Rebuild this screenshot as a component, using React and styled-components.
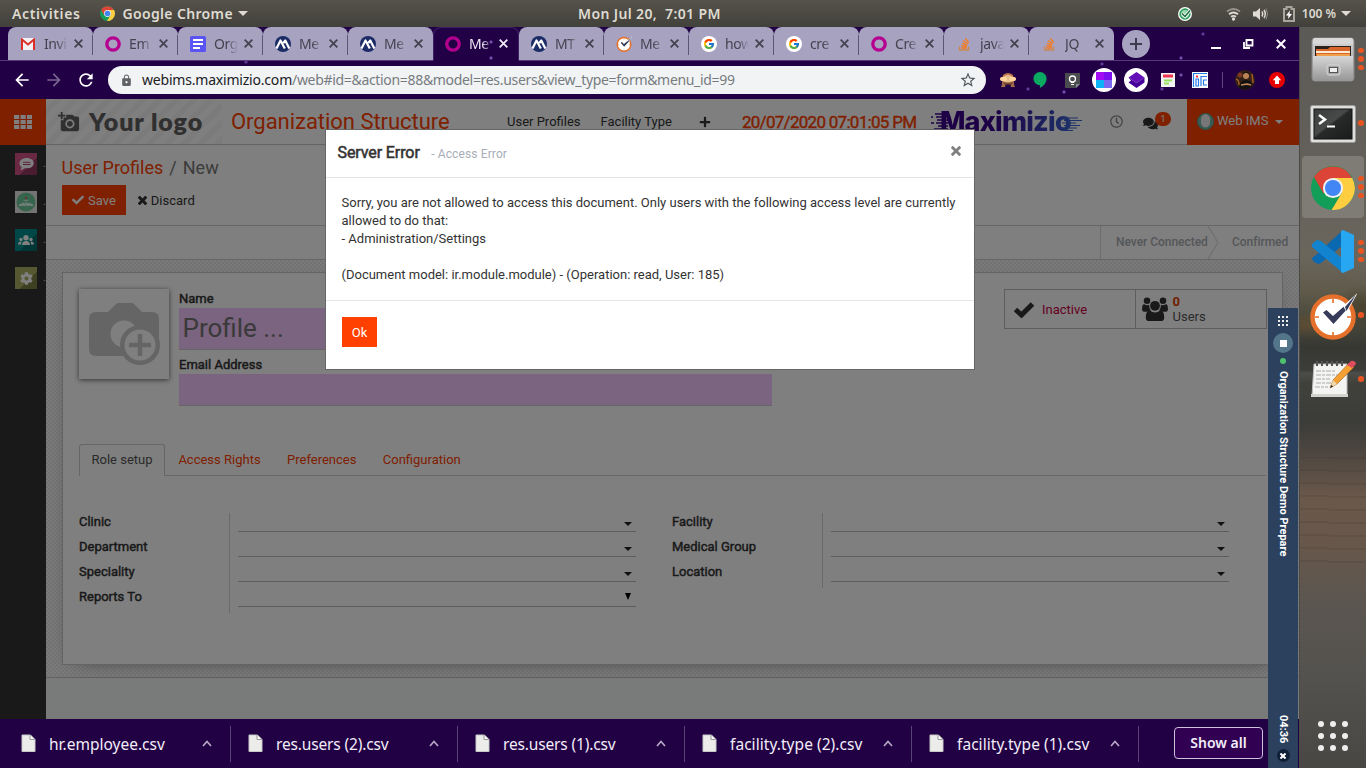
import React from "react";
import styled, { createGlobalStyle, css } from "styled-components";
import { FaCheck, FaComments, FaPlus, FaCog, FaRegClock } from "react-icons/fa";
import { MdLock, MdStarBorder, MdArrowBack, MdArrowForward, MdRefresh, MdAddAPhoto } from "react-icons/md";
import { FcGoogle } from "react-icons/fc";

const UI = `"Noto Sans", "Open Sans", sans-serif`;

const Global = createGlobalStyle`
  * { box-sizing: border-box; }
  html, body { margin: 0; overflow: hidden; }
  body { width: 1366px; height: 768px; font-family: Roboto, sans-serif; font-size: 13px; color: #333; }
  svg { display: block; flex: none; }
`;

const Desktop = styled.div`
  display: flex; flex-direction: column; width: 1366px; height: 768px; overflow: hidden;
`;
const Between = styled.div`display: flex; flex: 1; min-height: 0;`;

/* ---------- GNOME top bar ---------- */
const TopBar = styled.header`
  display: grid; grid-template-columns: 566px auto 1fr; align-items: center; height: 27px; flex: none;
  padding: 0 15px 0 12px; background: linear-gradient(#56534b, #41403a);
  font: 600 14px/27px ${UI}; color: #dfdbd2; white-space: pre;
`;
const BarGroup = styled.div`
  display: flex; align-items: center; justify-content: ${(p) => (p.$end ? "flex-end" : "flex-start")};
`;
const BarText = styled.span`letter-spacing: ${(p) => p.$ls || 0}px; margin-left: ${(p) => p.$ml || 0}px; font-size: ${(p) => p.$size || 14}px;`;
const BarIcon = styled.span`margin-left: ${(p) => p.$ml}px; display: flex;`;
const Caret = styled.i`
  width: 0; height: 0; border: ${(p) => p.$w || 5}px solid transparent; border-bottom: 0;
  border-top: ${(p) => p.$h || 5}px solid ${(p) => p.$c || "#dfdbd2"}; margin-left: ${(p) => p.$ml || 0}px;
`;

/* ---------- browser frame ---------- */
const Browser = styled.div`
  position: relative; width: 1299px; display: flex; flex-direction: column; background: #210046;
`;
const star = (x, y, c = "#9a7be0") => `radial-gradient(circle at ${x}px ${y}px, ${c} 0, ${c}88 1px, transparent 2.2px)`;
const TabStrip = styled.div`
  display: flex; height: 34px; flex: none; padding-left: 8px; border-bottom: 1px solid #57397b;
  background: ${star(1181, 31)}, ${star(1203, 7, "#7a5cc0")}, #210046;
`;
const Tab = styled.div`
  display: flex; align-items: center; width: 85px; height: 33px; padding: 0 10.5px 0 12px; position: relative;
  border-radius: 8px 8px 0 0; background: ${(p) => (p.$active ? "#210046" : "#a8a2c1")};
  color: ${(p) => (p.$active ? "#eeeaf6" : "#45424f")};
  ${(p) => p.$active && css`width: 86px; border: 1px solid #3d2166; border-bottom-color: #210046; height: 34px;
    padding: 0 10px 1px 11px; background: ${star(57, 14)}, ${star(57, 30)}, #210046;`}
  ${(p) => p.$line && css`&::after { content: ""; position: absolute; right: 0; top: 8px; width: 1px; height: 20px; background: #5d5675; }`}
`;
const TabIcon = styled.span`display: flex; justify-content: center; width: 16px;`;
const TabTitle = styled.span`
  width: 24px; margin-left: 8px; overflow: hidden; white-space: nowrap; font: 14px/20px ${UI}; letter-spacing: -.4px;
  mask-image: linear-gradient(90deg, #000 55%, transparent 100%);
`;
const TabClose = styled.span`margin-left: auto; display: flex;`;
const NewTab = styled.div`
  display: grid; place-items: center; width: 28px; height: 28px; margin: 3px 0 0 8px; border-radius: 50%;
  background: #a8a2c1; color: #403a50;
`;
const WindowButtons = styled.div`display: flex; align-items: center; margin-left: auto; padding-right: 13px; gap: 22px;`;

const Toolbar = styled.div`
  display: flex; align-items: center; height: 38px; flex: none; padding: 0 14px 0 12px; color: #fff;
  background: ${star(1064, 31)}, ${star(1181, 14)}, ${star(1028, 28, "#7a5cc0")}, ${star(1102, 3, "#7a5cc0")}, ${star(1162, 28, "#7a5cc0")}, ${star(246, 1, "#7a5cc0")}, #210046;
`;
const ToolIcon = styled.span`display: flex; margin-left: ${(p) => p.$ml || 0}px; opacity: ${(p) => (p.$dim ? 0.4 : 1)};`;
const Address = styled.div`
  display: flex; align-items: center; width: 878px; height: 28px; margin-left: 12px; padding: 0 9px 0 12px;
  border-radius: 14px; background: #f1f3f5; color: #777c80; font: 14px/28px ${UI}; white-space: nowrap;
  b { font-weight: 400; color: #202124; letter-spacing: -.2px; margin-left: 9px; }
  span { letter-spacing: -.32px; }
  svg:last-child { margin-left: auto; }
`;
const Extensions = styled.div`display: flex; align-items: center; margin-left: auto;`;
const Ext = styled.span`
  display: grid; place-items: center; width: ${(p) => p.$w || 24}px; height: 24px; margin-left: ${(p) => (p.$ml ?? 8)}px;
  border-radius: 50%; background: ${(p) => p.$bg || "transparent"};
`;
const Divider = styled.i`width: 1px; height: 16px; background: #5e4580; margin-left: 10px;`;

/* ---------- web page ---------- */
const Page = styled.div`position: relative; display: flex; height: 620px; flex: none; background: #fff;`;
const Side = styled.nav`
  width: 46px; background: #333; display: flex; flex-direction: column; overflow: hidden; flex: none;
`;
const Apps = styled.div`height: 46px; background: #ff4000; display: grid; place-items: center; margin-bottom: 8px;`;
const SideItem = styled.div`
  display: flex; align-items: center; width: 46px; height: 22px; margin-bottom: 16px; padding-left: 15px; color: #ddd; flex: none;
  font-size: 10px; line-height: 22px;
`;
const SideTile = styled.span`
  width: 23px; height: 22px; display: grid; place-items: center; margin-right: 6px;
  background: ${(p) => p.$bg};
`;
const Main = styled.main`flex: 1; min-width: 0; display: flex; flex-direction: column;`;
const Nav = styled.div`
  display: flex; align-items: center; height: 46px; flex: none; border-bottom: 1px solid #c8c8c8; color: #333; white-space: nowrap;
`;
const LogoArea = styled.div`
  display: flex; align-items: center; width: 176px; height: 45px; padding-left: 12px; color: #606060; flex: none;
  background: repeating-linear-gradient(135deg, #fff 0 6px, #f7f7f7 6px 12px);
  span { font: 800 25px/43px Lato, sans-serif; margin-left: 9px; letter-spacing: .9px; }
`;
const AppName = styled.div`width: 232px; margin-left: 9px; font-size: 22px; line-height: 45px; color: #ff4000; letter-spacing: -.03px;`;
const NavLink = styled.div`margin-left: ${(p) => p.$ml}px; line-height: 44px; display: flex; align-items: center;`;
const Clock = styled.div`width: 175px; margin-left: 31px; font-size: 17px; color: #ff4000; -webkit-text-stroke: .4px; letter-spacing: -.71px;`;
const Brand = styled.div`
  display: flex; align-items: center; width: 153px; margin-left: 13px; height: 45px;
  span { font: 800 27px/43px Inter, sans-serif; letter-spacing: -.75px; margin-left: -8px;
    background: linear-gradient(90deg, #3a008c 0 40%, #3a62d0); background-clip: text; color: transparent; }
  svg:last-child { margin-left: -9px; margin-top: 5px; }
`;
const Bubble = styled.div`
  position: relative; width: 28px; height: 18px; margin-left: 20px; padding-top: 3px;
`;
const Badge = styled.span`
  position: absolute; left: 12px; top: -1px; width: 16px; height: 14px; border-radius: 7px; background: #ff4000;
  color: #fff; font-size: 9.5px; line-height: 14px; text-align: center;
`;
const User = styled.div`
  display: flex; align-items: center; width: 112px; height: 46px; margin: 1px 0 0 auto; padding-left: 10px; line-height: 44px;
  background: #ff4000; color: #fff; flex: none; span { margin: -2px 0 0 3px; }
`;
const Avatar = styled.i`
  width: 17px; height: 17px; border-radius: 50%; border: 1px solid #4f9f90; margin-top: -2px;
  background: radial-gradient(ellipse 5px 7px at 50% 45%, #eee 0 92%, transparent), #74b8a8;
`;
const Control = styled.div`height: 81px; flex: none; padding: 11px 16px 0 15.5px; border-bottom: 1px solid #ccc;`;
const Crumbs = styled.div`font-size: 18px; line-height: 24px; color: #777; b { font-weight: 400; color: #ff4000; } i { font-style: normal; margin: 0 6px; }`;
const Buttons = styled.div`display: flex; margin: 5px 0 0 .5px; align-items: center; color: #333;`;
const Btn = styled.div`
  display: flex; align-items: center; height: 30px; padding: 0 ${(p) => (p.$primary ? 10 : 12)}px;
  ${(p) => p.$primary && css`background: #ff4000; color: #fff;`}
  span { margin-left: 4px; }
`;
const Status = styled.div`
  display: flex; justify-content: flex-end; height: 34px; flex: none; border-bottom: 1px solid #ccc; color: #a9adb2;
  font: 500 12px/33px Roboto, sans-serif; white-space: nowrap;
`;
const Stage = styled.div`
  display: flex; padding-left: ${(p) => (p.$first ? 15 : 13)}px; width: ${(p) => (p.$first ? 119 : 80)}px;
  letter-spacing: -.03px;
  ${(p) => p.$first && css`border-left: 1px solid #d9d9d9;`} svg { margin-left: auto; }
`;
const Canvas = styled.div`
  height: 418px; flex: none; padding: 12px 16px; border-bottom: 1px solid #c4c4c4;
  background: conic-gradient(#e6e6e6 25%, #f6f6f6 0 50%, #e6e6e6 0 75%, #f6f6f6 0) 0 0 / 4px 4px;
`;
const Sheet = styled.section`
  height: 393px; padding: 16px; background: #fff; border: 1px solid #c8c8c8; box-shadow: 0 5px 20px -15px #000;
`;
const Head = styled.div`display: flex; height: 155px;`;
const Photo = styled.div`
  width: 90px; height: 90px; box-shadow: 0 1px 5px rgba(0,0,0,.6); display: grid; place-items: center; background: #fff;
`;
const Identity = styled.div`width: 593px; margin-left: 10px; padding-top: 1px;`;
const Label = styled.div`
  font-size: 13px; line-height: ${(p) => p.$lh || 18}px; color: #333; -webkit-text-stroke: .45px #333; white-space: nowrap;
`;
const Input = styled.div`
  height: ${(p) => p.$h}px; background: #f4c8ff; border-bottom: 1px solid #ccc; margin-bottom: 6px; padding-left: 3.5px;
  font-size: 26px; line-height: ${(p) => p.$h - 1}px; color: #757575;
`;
const StatBox = styled.div`
  display: flex; width: 263px; height: 40px; margin: 0 -1px 0 auto; border: 1px solid #bbb; color: #333;
`;
const Stat = styled.div`
  display: flex; align-items: center; width: 131px; padding-left: ${(p) => (p.$first ? 8 : 6)}px; line-height: 15px;
  ${(p) => p.$first && css`border-right: 1px solid #bbb; color: #cc0044;`}
  span { margin-left: ${(p) => (p.$first ? 7 : 5)}px; color: ${(p) => (p.$first ? "#cc0044" : "#555")}; }
  b { display: block; font-weight: 700; color: #e04000; }
`;
const Tabs = styled.div`display: flex; height: 32px; border-bottom: 1px solid #ccc; width: 1187px; color: #ff4000; line-height: 30px; gap: 26.4px;`;
const FormTab = styled.div`
  ${(p) => p.$on && css`height: 32px; width: 86px; margin-right: -13px; padding-left: 11.5px; background: #fff; color: #555;
    border: 1px solid #ccc; border-bottom: 0; border-radius: 3px 3px 0 0;`}
  ${(p) => !p.$on && css`padding-top: 1px;`}
`;
const Groups = styled.div`display: flex; margin-top: 37px; gap: 36px;`;
const Group = styled.div`width: 557px;`;
const Field = styled.div`display: flex; height: 25px;`;
const FieldLabel = styled(Label)`width: 151px; border-right: 1px solid #d4d4d4; line-height: 18px;`;
const Select = styled.div`
  width: 398px; height: 19px; margin-left: 8px; border-bottom: 1px solid #bbb; display: flex; justify-content: flex-end;
  align-items: center; padding: ${(p) => (p.$tall ? "0 5px 1px 0" : "3px 4px 0 0")};
`;
const Footer = styled.div`flex: 1; background: #f3f4f4;`;

/* ---------- dialog ---------- */
const Backdrop = styled.div`position: absolute; inset: 0; background: rgba(0, 0, 0, .5);`;
const Dialog = styled.div`
  position: absolute; left: 325px; top: 30px; width: 650px; height: 241px; background: #fff; border: 1px solid #666;
`;
const DialogHead = styled.div`
  display: flex; height: 48px; border-bottom: 1px solid #e5e5e5; padding: 1px 12px 0 11.5px; line-height: 44px; color: #a8adb8;
  b { font-weight: 400; font-size: 16px; color: #333; -webkit-text-stroke: .55px #333; margin-right: 11.5px; letter-spacing: -.1px; }
  small { font-size: 12px; line-height: 47px; letter-spacing: .12px; } svg { margin: 15px 1px 0 auto; }
`;
const DialogBody = styled.div`height: 123px; padding: 16px 15.5px; line-height: 18px; border-bottom: 1px solid #e5e5e5; color: #333; white-space: pre;`;
const Ok = styled.div`margin: 16px; width: 35px; height: 30px; background: #ff4000; color: #fff; line-height: 31px; text-align: center;`;

/* ---------- recorder strip ---------- */
const Recorder = styled.div`
  position: absolute; left: 1268px; top: 281px; width: 30px; height: 460px; background: #2b415e; color: #fff;
  display: flex; flex-direction: column; align-items: center; padding: 8px 0 6px;
`;
const Grip = styled.div`
  display: grid; grid-template-columns: repeat(3, ${(p) => p.$d}px); gap: ${(p) => p.$g}px;
  i { height: ${(p) => p.$d}px; background: #eee; border-radius: ${(p) => p.$r || 0}px; }
`;
const Stop = styled.div`width: 20px; height: 20px; border-radius: 50%; background: #54768a; display: grid; place-items: center; margin-top: 7px; i { width: 7px; height: 7px; background: #fff; }`;
const Live = styled.i`width: 6px; height: 6px; border-radius: 50%; background: #4ec06e; margin-top: 5px;`;
const Vertical = styled.div`writing-mode: vertical-rl; white-space: nowrap; font: 700 11px/14px Roboto, sans-serif; margin-top: ${(p) => p.$mt};`;
const CloseDot = styled.div`width: 13px; height: 13px; border-radius: 50%; background: #102036; display: grid; place-items: center; margin-top: 6px;`;

/* ---------- downloads ---------- */
const Downloads = styled.div`display: flex; align-items: center; height: 49px; flex: none; background: #210044; color: #f2edf8; font: 15.5px/20px ${UI};`;
const Download = styled.div`
  display: flex; align-items: center; width: 227px; height: 36px; padding: 0 18px 0 17px; border-right: 1px solid #5a4378; white-space: nowrap;
  &:first-child { width: 231px; padding-left: 21px; }
  span { margin: 1px 0 0 13px; letter-spacing: ${(p) => p.$ls}px; } svg:last-child { margin-left: auto; }
`;
const ShowAll = styled.div`
  width: 89px; height: 32px; margin: -1px 0 0 35px; border: 1px solid #cdc3dc; border-radius: 4px; background: #310052;
  font: 600 14px/30px ${UI}; text-align: center;
`;

/* ---------- dock ---------- */
const Dock = styled.aside`
  width: 67px; padding: 1px 2px 17px 2px; display: flex; flex-direction: column; align-items: center; border-left: 1px solid #4c4a46;
  background:
    repeating-linear-gradient(1deg, transparent 0 5px, rgba(30, 28, 25, .10) 5px 7px, transparent 7px 13px) 0 430px / 100% 110px no-repeat,
    radial-gradient(ellipse 34px 14px at 8px 298px, rgba(110, 82, 46, .6), transparent),
    radial-gradient(ellipse 26px 22px at 62px 280px, rgba(70, 62, 42, .8), transparent),
    linear-gradient(#5c5a57 0, #63605a 130px, #6a665c 230px, #5f5a4a 265px, #4a4a3c 290px, #373833 320px, #3c3d39 343px, #4c4c49 346px, #41413c 356px,
    #3b3c39 395px, #504841 430px, #6a584b 470px, #67574a 520px, #5c5650 570px, #55534f 640px, #484744 741px);
`;
const DockItem = styled.div`
  position: relative; width: 62px; height: 62px; margin-bottom: 2px; border-radius: 4px; display: grid; place-items: center; flex: none;
  background: ${(p) => (p.$on ? "#7f7c76" : "transparent")}; padding-top: 1px;
`;
const Dots = styled.div`
  position: absolute; right: 0; top: 0; bottom: 0; display: flex; flex-direction: column; justify-content: center; gap: 3px;
  i { width: 5.6px; height: 5.6px; border-radius: 50%; background: #e95420; }
`;
const Launcher = styled.div`margin-top: auto;`;

/* ---------- drawings ---------- */
const ChromeLogo = ({ s }) => (
  <svg width={s} height={s} viewBox="0 0 48 48">
    <circle cx="24" cy="24" r="24" fill="#129d58" />
    <path d="M3.2 12A24 24 0 0 1 44.8 13H24L13.6 30Z" fill="#db4437" />
    <path d="M24 13H45A24 24 0 0 1 22.5 48L33.5 29.5Z" fill="#ffcd40" />
    <circle cx="24" cy="24" r="11" fill="#f1f1f1" /><circle cx="24" cy="24" r="8.8" fill="#4285f4" />
  </svg>
);
const Gmail = () => (
  <svg width="14" height="12" viewBox="0 0 14 12"><rect width="14" height="12" rx="1" fill="#f2f0f2" /><path d="M1 12V1.5L7 6.5l6-5V12" fill="none" stroke="#d9302a" strokeWidth="2" /></svg>
);
const Ring = () => <svg width="16" height="16"><circle cx="8" cy="8" r="6.2" fill="none" stroke="#b5008f" strokeWidth="3.3" /></svg>;
const Doc = () => <svg width="16" height="16"><rect width="16" height="16" rx="1.5" fill="#5a55f2" /><path d="M3 4h10M3 8h10M3 12h7" stroke="#fff" strokeWidth="1.8" /></svg>;
const Peaks = () => <svg width="16" height="16"><circle cx="8" cy="8" r="8" fill="#1d2c66" /><path d="M1.500 12.500 5.500 4.500l4.300 8M8.300 7 10.300 4.500l4 8" stroke="#fff" strokeWidth="2.200" fill="none" strokeLinejoin="round" /></svg>;
const TimeCheck = ({ s }) => (
  <svg width={s} height={s} viewBox="0 0 48 48">
    <circle cx="24" cy="25" r="20.5" fill="#fff" stroke="#e4702b" strokeWidth="4.5" />
    <path d="M24 7v4M24 40v4M6 25h4M38 25h4" stroke="#e4702b" strokeWidth="1.6" />
    <path d="M14 20.500 17.500 18l6.500 6L36 13.500l4 1.500L24.500 32Z" fill="#353b59" />
    <path d="M34 14 48.500 1 40 16.500l-3 2.500Z" fill="#fff" /><path d="m36 15 11-12.500L37.500 19Z" fill="#353b59" />
  </svg>
);
const Google = () => <svg width="16" height="16"><circle cx="8" cy="8" r="8" fill="#fff" /><FcGoogle x="2" y="2" size={12} /></svg>;
const Stack = () => (
  <svg width="13" height="14"><path d="M1.500 9.500v3.500h9V9.500" fill="none" stroke="#c9894f" strokeWidth="1.300" /><path d="M3.200 11h5.600M3.300 8.700l5.500.8M4 6.200l5.200 1.900M5.300 3.600l4.500 3.200M7.500 1.300l3.300 4.400" stroke="#f47a20" strokeWidth="1.400" /></svg>
);
const Cross = ({ s = 8, w = 1.8, c = "currentColor" }) => <svg width={s} height={s} viewBox="0 0 8 8"><path d="m.6.6 6.8 6.8M7.4.6.6 7.4" stroke={c} strokeWidth={w * 8 / s} /></svg>;
const Plus = () => <svg width="12" height="12"><path d="M6 0v12M0 6h12" stroke="#403a50" strokeWidth="2" /></svg>;
const File = () => <svg width="15" height="20" viewBox="0 0 15 20"><path d="M1 1h8.500L14 5.500v12H1Z" fill="#ececea" stroke="#c9c9c9" /><path d="M9 1v4.500h4.500" fill="#fff" stroke="#999" /></svg>;
const Chevron = () => <svg width="10" height="7"><path d="m1 6 4-4.5L9 6" fill="none" stroke="#b9abc9" strokeWidth="1.6" /></svg>;
const Wifi = () => <svg width="15" height="14"><g fill="none" stroke="#dfdbd2" strokeWidth="1.8"><path d="M1 4.500q6.500-5 13 0" opacity=".5" /><path d="M3 7.200q4.500-3.500 9 0M5 9.800q2.500-1.700 5 0" /></g><circle cx="7.500" cy="12" r="1.700" fill="#dfdbd2" /></svg>;
const Speaker = () => <svg width="15" height="14"><path d="M0 4.500h3L7 1v12L3 9.500H0Z" fill="#dfdbd2" /><path d="M9 4.500q1.500 2.500 0 5M11 3q2.500 4 0 8" stroke="#dfdbd2" strokeWidth="1.500" fill="none" /><path d="M13 1.500q3 5.500 0 11" stroke="#8f8c85" fill="none" /></svg>;
const Battery = () => <svg width="12" height="16"><path d="M1 3h2.500V1h5v2H11v12H1Z" fill="none" stroke="#a8a59d" strokeWidth="2" /><path d="M7 4.500 3 9.500h2.500L5 13l4-5H6.500Z" fill="#fff" /></svg>;
const Synced = () => <svg width="14" height="14"><circle cx="7" cy="7" r="6.300" fill="#2e9c5a" stroke="#fff" strokeWidth="1.300" /><circle cx="7" cy="7" r="4" fill="#9bd8ae" /><path d="m4 6.500 3 3 5-6" stroke="#fff" strokeWidth="3" fill="none" /><path d="m4 6.500 3 3 5-6" stroke="#17643a" strokeWidth="1.400" fill="none" /></svg>;
const Peek = () => <svg width="16" height="16"><path d="M3 3q5-4 10 0l1 9H2Z" fill="#b9764a" /><ellipse cx="8" cy="7" rx="5" ry="4" fill="#e8bd8e" /><ellipse cx="3.500" cy="7" rx="3.500" ry="2.200" fill="#ffd79e" /><ellipse cx="12.500" cy="7" rx="3.500" ry="2.200" fill="#ffd79e" /><path d="M1 15l2-5h3l-1 5ZM15 15l-2-5h-3l1 5Z" fill="#a26d4a" /><path d="M3 10.500h10l-1 2H4Z" fill="#7a4a30" /></svg>;
const Hangout = () => <svg width="14" height="16"><path d="M7 0a6.600 6.600 0 0 0 0 13.200V16q6.800-4 6.600-9.400A6.600 6.600 0 0 0 7 0Z" fill="#0ba862" /></svg>;
const Keep = () => <svg width="15" height="15"><path d="M0 0h15v11l-4 4H0Z" fill="#4a4c50" /><path d="M11 15v-4h4Z" fill="#8b8d90" /><circle cx="7.500" cy="6" r="3" fill="none" stroke="#fff" strokeWidth="1.300" /><path d="M6 9.500h3M6 11.500h3" stroke="#fff" /></svg>;
const Quad = () => <svg width="16" height="16"><rect width="8" height="8" fill="#a10cf5" /><rect x="8" width="8" height="8" fill="#7b0ff0" /><rect y="8" width="8" height="8" fill="#0cb3f7" /><rect x="8" y="8" width="8" height="8" fill="#7a68f2" /></svg>;
const Layers = () => <svg width="17" height="16"><path d="m8.500 0 8 5.500-8 5.500-8-5.500Z" fill="#6310b8" /><path d="m.5 5.500 8 5.500 8-5.500v5l-8 5.500-8-5.500L3 8.500Z" fill="#46009a" /></svg>;
const Card = () => <svg width="14" height="14"><rect width="14" height="14" fill="#f3f3f3" /><rect x="2" y="1.500" width="10" height="3" fill="#ef3550" /><path d="M3 7.500h8M3 10.500h5" stroke="#98e25c" strokeWidth="1.800" /></svg>;
const IcSquare = () => <svg width="16" height="16"><rect width="16" height="16" fill="#fff" /><path d="M1.500 15V1.500H15M4 7h2.500v7H4ZM15 4.500H9V14M15 8h-3.500v5H15" fill="none" stroke="#2479e8" strokeWidth="1.200" /><path d="M5 3.500v2" stroke="#e33" strokeWidth="2.200" /></svg>;
const Face = () => <svg width="20" height="20"><circle cx="10" cy="10" r="10" fill="#352016" /><circle cx="5" cy="5" r="2.500" fill="#7c3824" /><circle cx="11" cy="6" r="3" fill="#b98355" /><path d="M8 4q3-3 6 0V3q-3-3-6 0Z" fill="#111" /><path d="M4 18q1-8 7-8t6 6q-5 6-13 2" fill="#111" /><path d="m6 15 6-1 4 1" stroke="#c78a5a" strokeWidth="1.500" fill="none" /><path d="M1 9q3 1 3 6M17 4l1 9" stroke="#a15c24" strokeWidth="1.500" /></svg>;
const Update = () => <svg width="16" height="16"><circle cx="8" cy="8" r="8" fill="#e60000" /><path d="m8 3.500 4.200 4.700H10V12H6V8.200H3.800Z" fill="#fff" /></svg>;
const People = ({ w, c = "#333" }) => (
  <svg width={w} height={w * 0.94} viewBox="0 0 26 24.500" fill={c}>
    <circle cx="5" cy="3.800" r="3.300" /><circle cx="21" cy="3.800" r="3.300" />
    <path d="M0 12.500Q0 6.800 2.300 7.200 5 9 7 7.800 7 11 8.800 13.300 7 14 6.200 14.800H2.300Q0 14.800 0 12.500ZM26 12.500Q26 6.800 23.700 7.200 21 9 19 7.800 19 11 17.200 13.300 19 14 19.800 14.800h3.900Q26 14.800 26 12.500Z" />
    <circle cx="13" cy="8.800" r="4.900" /><path d="M3.700 20.500q0-6.700 4.300-6.900 2 1.900 5 1.900t5-1.900q4.300.2 4.300 6.900 0 3.800-3.600 3.800H7.300q-3.600 0-3.600-3.800Z" />
  </svg>
);
const Crowd = () => (
  <svg width="16" height="11" fill="#fff"><circle cx="8" cy="2.800" r="2.700" /><circle cx="3" cy="4.500" r="1.700" /><circle cx="13" cy="4.500" r="1.700" /><path d="M4 10q0-4 4-4t4 4ZM0 9.500q0-3 3.500-3L3 9.500ZM16 9.500q0-3-3.500-3l.5 3Z" /></svg>
);
const Speech = () => <svg width="15" height="13"><path d="M7.700 0C3.500 0 .5 2.300.5 5.300c0 1.700.8 3 2.200 4L1.500 12q2.400-.3 4-1.800 8.800 1 9.300-4.900C14.800 2.300 11.800 0 7.700 0Z" fill="#fff" /><path d="M4 4.300h7.500M4 6.500h7.500" stroke="#b34572" /></svg>;
const Cam = () => (
  <svg width="71" height="62" viewBox="0 0 71 62">
    <path d="M7 9h12l8-8q1-1 2-1h14q1 0 2 1l8 8h10q7 0 7 7v30q0 7-7 7H7q-7 0-7-7V16q0-7 7-7Z" fill="#cbcbcb" />
    <circle cx="35" cy="31" r="13.500" fill="#fff" /><circle cx="51" cy="42" r="20" fill="#cbcbcb" /><circle cx="51" cy="42" r="15.500" fill="#fff" />
    <path d="M51 31v22M40 42h22" stroke="#cbcbcb" strokeWidth="4.500" />
  </svg>
);
const Speed = () => (
  <svg width="18" height="20" viewBox="0 0 18 20"><path d="M5 2h13M1 5h2M6 5h12M7 8h11M1 11h3M6 11h12M8 14h10M4 17h14" stroke="#3a008c" strokeWidth="1.700" /></svg>
);
const Trail = () => (
  <svg width="20" height="16" viewBox="0 0 20 16"><path d="M0 2h16M2 4.500h18M0 7h14M2 9.500h16M0 12h15M0 14.500h11" stroke="#3a62d0" strokeWidth="1.200" /></svg>
);
const Cabinet = () => (
  <svg width="44" height="46" viewBox="0 0 44 46">
    <defs><linearGradient id="cab" x2="0" y2="1"><stop stopColor="#d6d6d6" /><stop offset="1" stopColor="#969696" /></linearGradient></defs>
    <rect x="1" y="1" width="42" height="43" rx="3" fill="url(#cab)" stroke="#888" /><path d="M2 7V3q0-2 2-2h36q2 0 2 2v4Z" fill="#d8d8d8" />
    <rect x="4" y="9" width="36" height="12" fill="#2b211b" /><path d="M5 12h12l2-2h20v10H5Z" fill="#d9662c" /><path d="M5 14h34v2H5Z" fill="#fce9d0" /><path d="M6 18h33" stroke="#f0a04a" strokeWidth="2" />
    <path d="M2 19h40v23q0 2-2 2H4q-2 0-2-2Z" fill="url(#cab)" /><rect x="16" y="28" width="13" height="10" rx="2" fill="#aaa" stroke="#d9d9d9" /><rect x="18.500" y="30.500" width="8" height="5" fill="#eee" stroke="#555" />
  </svg>
);
const Terminal = () => (
  <svg width="46" height="38" viewBox="0 0 46 38"><defs><linearGradient id="term" x2="1" y2="1"><stop stopColor="#3a3c3b" /><stop offset=".45" stopColor="#484a49" /><stop offset=".5" stopColor="#282a29" /><stop offset="1" stopColor="#1a1c1b" /></linearGradient></defs>
    <rect x=".5" y=".5" width="45" height="37" rx="2" fill="#dededc" stroke="#999" /><rect x="4" y="4" width="38" height="30" fill="url(#term)" stroke="#111" />
    <path d="m9 10 6 4.500L9 19" fill="none" stroke="#fff" strokeWidth="2.500" /><path d="M17 21.500h8" stroke="#fff" strokeWidth="2" /></svg>
);
const Code = () => (
  <svg width="44" height="43" viewBox="0 0 44 43"><path d="M32 0 5 25l-4 3 1 3 5 3 3-1 22-18Z" fill="#0a69b0" /><path d="M1 14l5-4 4 1 22 18v14L1 17Z" fill="#1283cf" /><path d="M32 0 43 5v33L32 43l-2-1V1Z" fill="#27a7f2" /></svg>
);
const Notes = () => (
  <svg width="46" height="42" viewBox="0 0 46 42"><path d="M4 5h33v32H2Z" fill="#f4f4f2" stroke="#bbb" /><path d="M1 35h37v3H1Z" fill="#d2d2d0" />
    <path d="M7 2v5M12 2v5M17 2v5M22 2v5M27 2v5M32 2v5" stroke="#555" strokeWidth="2" /><path d="M6 12h20M6 16h22M6 20h14M6 24h18M5 28h13" stroke="#aaa" strokeDasharray="5 1 3 1" />
    <path d="m20 29 3-8L39 4l5 4-17 17Z" fill="#f5a032" stroke="#a7631b" strokeWidth=".6" /><path d="m37 6 4-4q4-1 5 3l-4 4Z" fill="#df4d5c" /><path d="m20 29 3-8 4 4Z" fill="#f0d7b0" /><path d="m20 29 1.200-3 2 1.500Z" fill="#222" /></svg>
);

const tabs = [
  ["Invi", Gmail, 1], ["Em", Ring, 1], ["Org", Doc, 1], ["Me", Peaks, 1], ["Me", Peaks, 0], ["Me", Ring, 0, 1], ["MT", Peaks, 1],
  ["Me", () => <TimeCheck s={16} />, 1], ["how", Google, 1], ["cre", Google, 1], ["Cre", Ring, 1], ["java", Stack, 1], ["JQ", Stack, 0],
];
const downloads = [["hr.employee.csv", 0], ["res.users (2).csv", -0.15], ["res.users (1).csv", -0.15], ["facility.type (2).csv", 0.05], ["facility.type (1).csv", 0.05]];
const dock = [[Cabinet, 3], [Terminal, 1], [() => <ChromeLogo s={44} />, 3, 1], [Code, 3], [() => <TimeCheck s={48} />, 1], [Notes, 1]];

const FieldGroup = ({ labels }) => (
  <Group>
    {labels.map((l) => (
      <Field key={l}><FieldLabel>{l}</FieldLabel>
        <Select $tall={l === "Reports To"}>{l === "Reports To" ? <Caret $w={3.5} $h={7} $c="#000" /> : <Caret $w={4} $h={4} $c="#222" />}</Select>
      </Field>
    ))}
  </Group>
);

export default function App() {
  return (
    <Desktop>
      <Global />
      <TopBar>
        <BarGroup>
          <BarText $ls={0.6}>Activities</BarText><BarIcon $ml={20}><ChromeLogo s={15} /></BarIcon>
          <BarText $ml={7} $ls={0.35}>Google Chrome</BarText><Caret $ml={5} />
        </BarGroup>
        <BarText $ls={0.37}>Mon Jul 20,  7:01 PM</BarText>
        <BarGroup $end>
          <Synced />
          <BarIcon $ml={34}><Wifi /></BarIcon><BarIcon $ml={12}><Speaker /></BarIcon><BarIcon $ml={15}><Battery /></BarIcon>
          <BarText $ml={7} $size={12}>100 %</BarText><Caret $ml={5} />
        </BarGroup>
      </TopBar>
      <Between>
        <Browser>
          <TabStrip>
            {tabs.map(([t, I, line, active], i) => (
              <Tab key={i} $line={line} $active={active}><TabIcon><I /></TabIcon><TabTitle>{t}</TabTitle><TabClose><Cross s={9} /></TabClose></Tab>
            ))}
            <NewTab><Plus /></NewTab>
            <WindowButtons>
              <svg width="10" height="10"><path d="M0 9h10" stroke="#fff" strokeWidth="2" /></svg>
              <svg width="11" height="10"><path d="M3.500 1h6v5.500h-6ZM1 3v6h6" fill="none" stroke="#fff" strokeWidth="1.800" /></svg>
              <Cross s={10} w={2} c="#fff" />
            </WindowButtons>
          </TabStrip>
          <Toolbar>
            <ToolIcon><MdArrowBack size={20} /></ToolIcon><ToolIcon $ml={12} $dim><MdArrowForward size={20} /></ToolIcon><ToolIcon $ml={12}><MdRefresh size={20} /></ToolIcon>
            <Address><MdLock size={13} color="#5f6368" /><b>webims.maximizio.com</b><span>/web#id=&amp;action=88&amp;model=res.users&amp;view_type=form&amp;menu_id=99</span><MdStarBorder size={18} color="#55595e" /></Address>
            <Extensions>
              <Ext $ml={0}><Peek /></Ext><Ext><Hangout /></Ext><Ext><Keep /></Ext><Ext $bg="#fff"><Quad /></Ext><Ext $bg="#fff"><Layers /></Ext><Ext><Card /></Ext><Ext><IcSquare /></Ext>
              <Divider /><Ext $w={20} $ml={12}><Face /></Ext>
              <ToolIcon $ml={14}><Update /></ToolIcon>
            </Extensions>
          </Toolbar>
          <Page>
            <Side>
              <Apps><svg width="18" height="14">{[0, 1, 2].map((r) => [0, 1, 2].map((c) => <rect key={`${r}${c}`} x={c * 6.5} y={r * 5} width="5.200" height="4" fill="#fff" />))}</svg></Apps>
              <SideItem><SideTile $bg="linear-gradient(135deg,#d45287 60%,#953860 60%)"><Speech /></SideTile>.</SideItem>
              <SideItem><SideTile $bg="#e9e9e9"><svg width="20" height="20"><circle cx="10" cy="10" r="9.500" fill="#6cc898" /><path d="M3 13.500q7-4 14 0M4 13h12" stroke="#e9fff4" strokeWidth="2" fill="none" strokeDasharray="2.500 .7" /><path d="M7 9q3-3 6 0Z" fill="#d9f5e8" /><circle cx="10" cy="6" r="1.200" fill="#c66" /></svg></SideTile>.</SideItem>
              <SideItem><SideTile $bg="linear-gradient(135deg,#009090 60%,#006c6c 60%)"><Crowd /></SideTile>.</SideItem>
              <SideItem><SideTile $bg="linear-gradient(135deg,#aab060 60%,#7c8144 60%)"><FaCog size={13} color="#fff" /></SideTile>.</SideItem>
            </Side>
            <Main>
              <Nav>
                <LogoArea><MdAddAPhoto size={22} /><span>Your logo</span></LogoArea>
                <AppName>Organization Structure</AppName>
                <NavLink $ml={44}>User Profiles</NavLink><NavLink $ml={20}>Facility Type</NavLink><NavLink $ml={27}><FaPlus size={12} /></NavLink>
                <Clock>20/07/2020 07:01:05 PM</Clock>
                <Brand><Speed /><span>Maximizio</span><Trail /></Brand>
                <NavLink $ml={27}><FaRegClock size={13} color="#888" /></NavLink>
                <Bubble><FaComments size={15} /><Badge>1</Badge></Bubble>
                <User><Avatar /><span>Web IMS</span><Caret $w={4} $h={4} $c="#fff" $ml={7} /></User>
              </Nav>
              <Control>
                <Crumbs><b>User Profiles</b><i>/</i>New</Crumbs>
                <Buttons><Btn $primary><FaCheck size={12} /><span>Save</span></Btn><Btn><Cross s={9} w={3} /><span>Discard</span></Btn></Buttons>
              </Control>
              <Status>
                <Stage $first>Never Connected<svg width="11" height="33"><path d="m0 0 10 16.500L0 33" fill="none" stroke="#d4d4d4" /></svg></Stage><Stage>Confirmed</Stage>
              </Status>
              <Canvas>
                <Sheet>
                  <Head>
                    <Photo><Cam /></Photo>
                    <Identity><Label>Name</Label><Input $h={42}>Profile ...</Input><Label>Email Address</Label><Input $h={32} /></Identity>
                    <StatBox>
                      <Stat $first><svg width="22" height="18"><path d="m2.500 9.500 6 5.500L19.500 4" fill="none" stroke="#333" strokeWidth="5" /></svg><span>Inactive</span></Stat>
                      <Stat><People w={26} /><span><b>0</b>Users</span></Stat>
                    </StatBox>
                  </Head>
                  <Tabs><FormTab $on>Role setup</FormTab><FormTab>Access Rights</FormTab><FormTab>Preferences</FormTab><FormTab>Configuration</FormTab></Tabs>
                  <Groups><FieldGroup labels={["Clinic", "Department", "Speciality", "Reports To"]} /><FieldGroup labels={["Facility", "Medical Group", "Location"]} /></Groups>
                </Sheet>
              </Canvas>
              <Footer />
            </Main>
            <Backdrop />
            <Dialog>
              <DialogHead><b>Server Error</b><small>- Access Error</small><Cross s={10} w={2.8} c="#7f7f7f" /></DialogHead>
              <DialogBody>{"Sorry, you are not allowed to access this document. Only users with the following access level are currently\nallowed to do that:\n- Administration/Settings\n\n(Document model: ir.module.module) - (Operation: read, User: 185)"}</DialogBody>
              <Ok>Ok</Ok>
            </Dialog>
          </Page>
          <Downloads>
            {downloads.map(([n, ls]) => <Download key={n} $ls={ls}><File /><span>{n}</span><Chevron /></Download>)}
            <ShowAll>Show all</ShowAll>
          </Downloads>
          <Recorder>
            <Grip $d={2} $g={2}>{[...Array(9)].map((_, i) => <i key={i} />)}</Grip>
            <Stop><i /></Stop><Live /><Vertical $mt="7px">Organization Structure Demo Prepare</Vertical>
            <Vertical $mt="auto">04:36</Vertical><CloseDot><Cross s={6} w={2} /></CloseDot>
          </Recorder>
        </Browser>
        <Dock>
          {dock.map(([I, n, on], i) => <DockItem key={i} $on={on}><I /><Dots>{[...Array(n)].map((_, k) => <i key={k} />)}</Dots></DockItem>)}
          <Launcher><Grip $d={6} $g={6} $r={3}>{[...Array(9)].map((_, i) => <i key={i} />)}</Grip></Launcher>
        </Dock>
      </Between>
    </Desktop>
  );
}
